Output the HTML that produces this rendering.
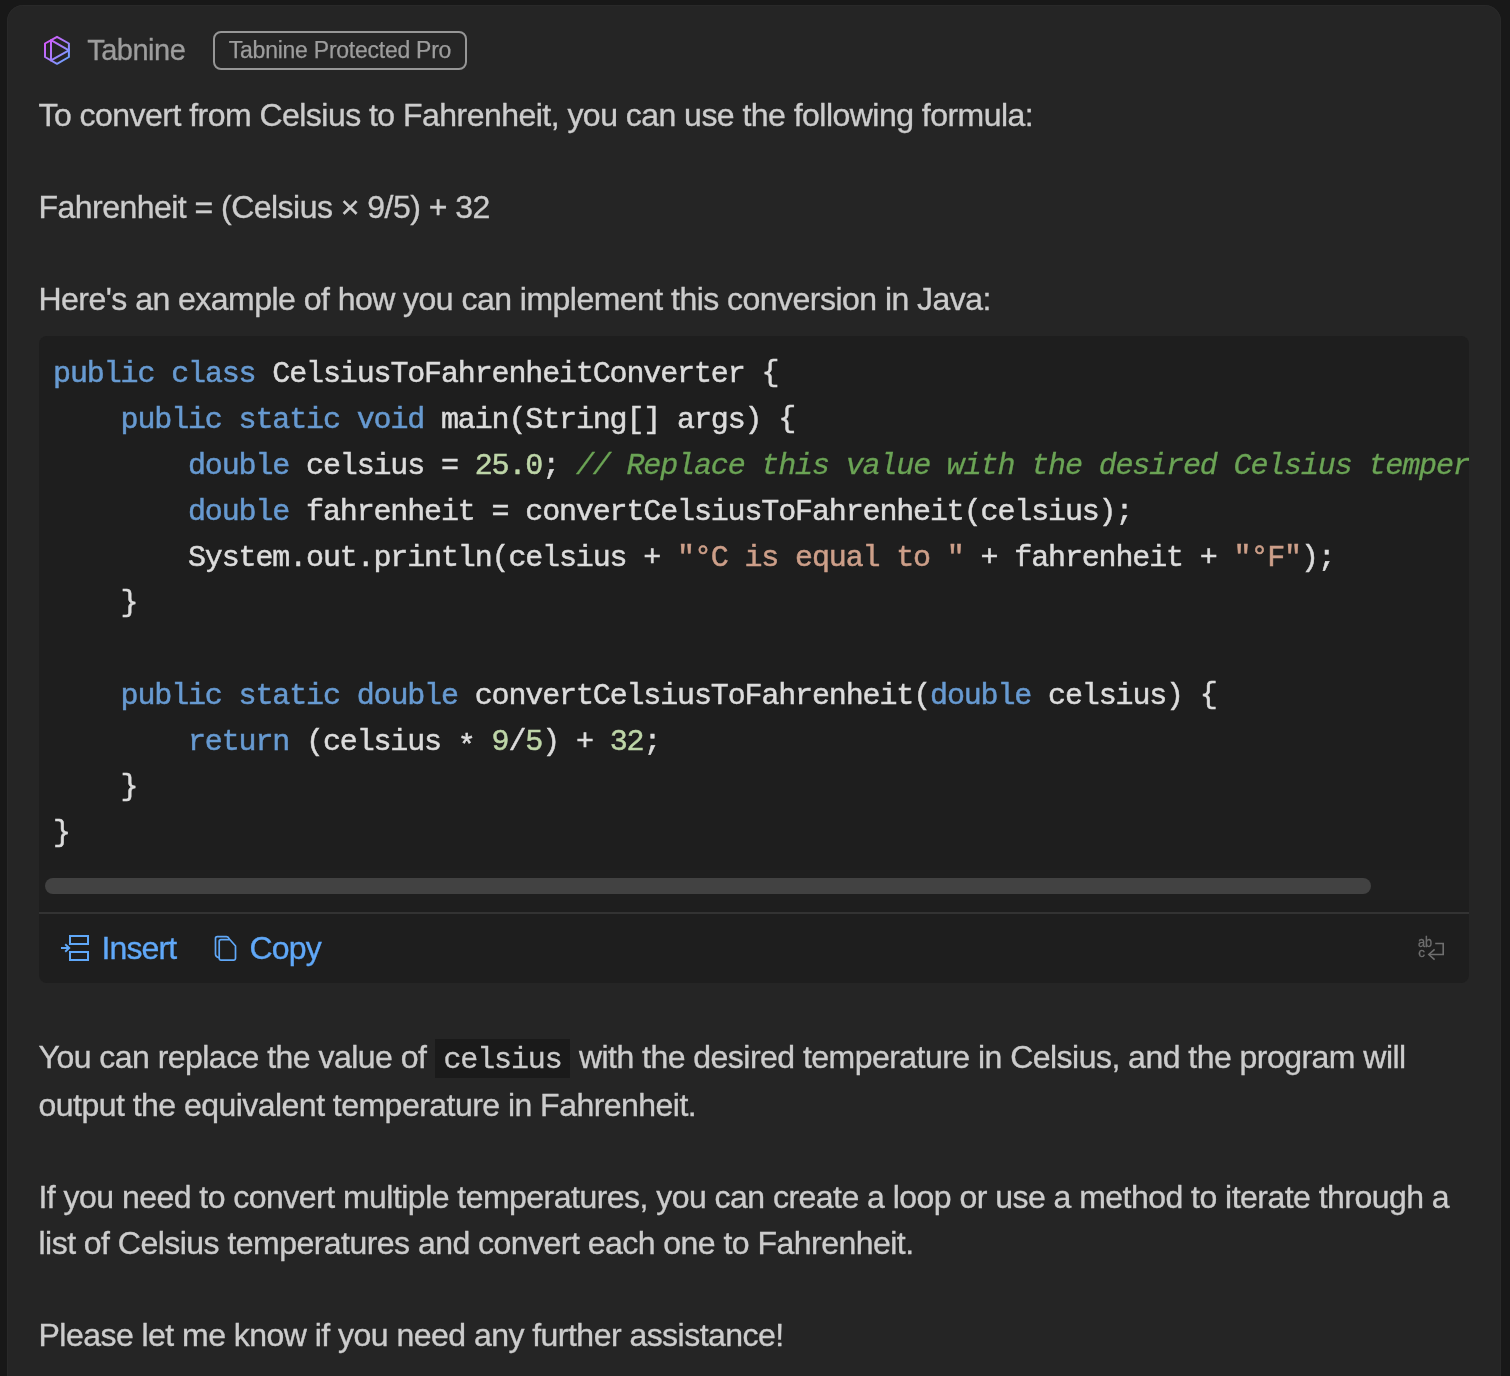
<!DOCTYPE html>
<html>
<head>
<meta charset="utf-8">
<title>Tabnine Chat</title>
<style>
  html, body { margin: 0; padding: 0; }
  body {
    width: 1510px; height: 1376px; overflow: hidden;
    background: #181818;
    font-family: "Liberation Sans", sans-serif;
    position: relative;
    -webkit-font-smoothing: antialiased;
  }
  .card {
    position: absolute; left: 7px; top: 5px; width: 1494px; height: 1400px;
    background: #252525; border-radius: 16px 16px 0 0;
    box-shadow: inset 0 0 0 1px #292929;
  }
  .abs { position: absolute; white-space: nowrap; }
  .p {
    position: absolute; left: 38.5px; white-space: nowrap;
    font-size: 32px; letter-spacing: -0.53px; line-height: 46px; color: #cccccc; -webkit-text-stroke: 0.35px #cccccc;
  }
  .title { left: 87.2px; top: 33px; font-size: 29px; letter-spacing: -0.5px; line-height: 34px; color: #9d9d9d; -webkit-text-stroke: 0.3px #9d9d9d; }
  .badge {
    left: 213px; top: 31px; width: 250px; height: 35px;
    border: 2px solid #969696; border-radius: 8px;
    font-size: 23px; letter-spacing: -0.25px; line-height: 35px; color: #9d9d9d; text-align: center; -webkit-text-stroke: 0.25px #9d9d9d;
  }
  .codeblock {
    position: absolute; left: 39px; top: 336px; width: 1430px; height: 647px;
    background: #1e1e1e; border-radius: 8px; overflow: hidden;
  }
  pre {
    position: absolute; left: 14.1px; top: 15px; margin: 0;
    font-family: "Liberation Mono", monospace; font-size: 30px; line-height: 46px;
    letter-spacing: -1.14px; color: #dcdcdc; white-space: pre; -webkit-text-stroke: 0.5px;
  }
  .b { position: relative; top: -1.5px; }
  .k { color: #679ad1; }
  .n { color: #bed6a8; }
  .c { color: #6ba455; font-style: italic; -webkit-text-stroke: 0.3px; }
  .s { color: #cd9f89; }
  .scroll { position: absolute; left: 6px; top: 542px; width: 1326px; height: 16px; border-radius: 8px; background: #424242; }
  .divider { position: absolute; left: 0; top: 576px; width: 1430px; height: 2px; background: #333333; }
  .link { position: absolute; font-size: 32px; letter-spacing: -0.53px; line-height: 46px; color: #60a8f8; white-space: nowrap; -webkit-text-stroke: 0.35px #60a8f8; }
  code.inl {
    font-family: "Liberation Mono", monospace; font-size: 30px; letter-spacing: -1.14px;
    background: #1a1a1a; padding: 4px 8px 0.5px 8.8px; margin-right: 1px; color: #cccccc; -webkit-text-stroke: 0.3px #cccccc;
  }
</style>
</head>
<body>
<div class="card"></div>
<div id="content" style="will-change:transform">

<!-- header -->
<svg class="abs" style="left:40px;top:32px" width="36" height="36" viewBox="40 32 36 36">
  <defs>
    <linearGradient id="lg" x1="45" y1="40" x2="69" y2="62" gradientUnits="userSpaceOnUse">
      <stop offset="0" stop-color="#d955fb"/>
      <stop offset="0.5" stop-color="#a77dfb"/>
      <stop offset="1" stop-color="#62a8ff"/>
    </linearGradient>
  </defs>
  <g fill="none" stroke="url(#lg)" stroke-width="2" stroke-linejoin="round" stroke-linecap="round">
    <path d="M57 36.8 L68.9 43.5 L68.9 57 L57 63.8 L45 57 L45 43.5 Z"/>
    <path d="M51 40.2 L51 60.4 M51 40.2 L68.9 50.3 L51 60.4"/>
  </g>
</svg>
<div class="abs title">Tabnine</div>
<div class="abs badge">Tabnine Protected Pro</div>

<div class="p" style="top:92px">To convert from Celsius to Fahrenheit, you can use the following formula:</div>
<div class="p" style="top:184px">Fahrenheit = (Celsius × 9/5) + 32</div>
<div class="p" style="top:276px">Here's an example of how you can implement this conversion in Java:</div>

<div class="codeblock">
<pre><span class="k">public</span> <span class="k">class</span> CelsiusToFahrenheitConverter <span class="b">{</span>
    <span class="k">public</span> <span class="k">static</span> <span class="k">void</span> main(String[] args) <span class="b">{</span>
        <span class="k">double</span> celsius = <span class="n">25.0</span>; <span class="c">// Replace this value with the desired Celsius temperature</span>
        <span class="k">double</span> fahrenheit = convertCelsiusToFahrenheit(celsius);
        System.out.println(celsius + <span class="s">"°C is equal to "</span> + fahrenheit + <span class="s">"°F"</span>);
    <span class="b">}</span>

    <span class="k">public</span> <span class="k">static</span> <span class="k">double</span> convertCelsiusToFahrenheit(<span class="k">double</span> celsius) <span class="b">{</span>
        <span class="k">return</span> (celsius <span style="position:relative;top:5px">*</span> <span class="n">9</span>/<span class="n">5</span>) + <span class="n">32</span>;
    <span class="b">}</span>
<span class="b">}</span></pre>
  <div style="position:absolute;left:0;top:534px;width:1430px;height:30px;background:#1f1f1f"></div>
  <div class="scroll"></div>
  <div class="divider"></div>
</div>

<!-- footer actions -->
<svg class="abs" style="left:58px;top:930px" width="36" height="36" viewBox="58 930 36 36">
  <g fill="none" stroke="#60a8f8" stroke-width="2">
    <rect x="70" y="936" width="18" height="8"/>
    <rect x="70" y="952" width="18" height="8"/>
    <path d="M61 948 H69.2 M65.2 944.3 L69.2 948 L65.2 951.7" stroke-width="1.9"/>
  </g>
</svg>
<div class="link" style="left:101.6px;top:925px;letter-spacing:-0.9px">Insert</div>
<svg class="abs" style="left:210px;top:930px" width="32" height="36" viewBox="210 930 32 36">
  <g fill="none" stroke="#60a8f8" stroke-width="1.7" stroke-linejoin="round">
    <path d="M221 939.7 H230 L235.5 946 V958.3 a1.8 1.8 0 0 1 -1.8 1.8 H221 a1.8 1.8 0 0 1 -1.8 -1.8 V941.5 a1.8 1.8 0 0 1 1.8 -1.8 Z"/>
    <path d="M219.2 957.6 Q215.5 957 215.5 954 V938.4 a1.8 1.8 0 0 1 1.8 -1.8 H226.5 Q228.3 936.6 229.4 939.2"/>
  </g>
</svg>
<div class="link" style="left:249.5px;top:925px;letter-spacing:-0.8px">Copy</div>

<!-- word wrap icon -->
<svg class="abs" style="left:1412px;top:930px" width="40" height="36" viewBox="1412 930 40 36">
  <g fill="none" stroke="#6f6f6f" stroke-width="1.6">
    <path d="M1435.2 943.5 H1443.2 V954.5 H1429"/>
    <path d="M1434.6 949.3 L1428.8 954.5 L1434.6 959.7"/>
  </g>
  <text x="1418" y="946.8" font-family="Liberation Sans, sans-serif" font-size="14.5" fill="#6f6f6f" stroke="#6f6f6f" stroke-width="0.3" textLength="14.2" lengthAdjust="spacingAndGlyphs">ab</text>
  <text x="1418.3" y="956.9" font-family="Liberation Sans, sans-serif" font-size="13.5" fill="#6f6f6f" stroke="#6f6f6f" stroke-width="0.3">c</text>
</svg>

<div class="p" style="top:1033px;line-height:48px">You can replace the value of <code class="inl">celsius</code> with the desired temperature in Celsius, and the program will</div>
<div class="p" style="top:1081px;line-height:48px">output the equivalent temperature in Fahrenheit.</div>
<div class="p" style="top:1174px">If you need to convert multiple temperatures, you can create a loop or use a method to iterate through a</div>
<div class="p" style="top:1220px">list of Celsius temperatures and convert each one to Fahrenheit.</div>
<div class="p" style="top:1312px">Please let me know if you need any further assistance!</div>
</div>
</body>
</html>
